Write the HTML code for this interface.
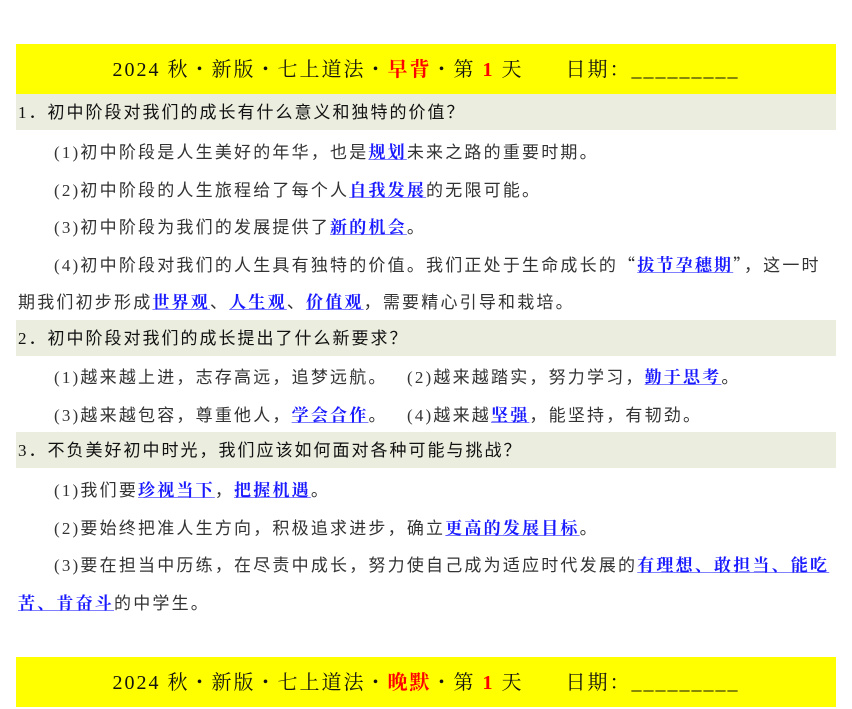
<!DOCTYPE html>
<html><head><meta charset="utf-8"><style>
body{margin:0;background:#fff;width:852px;height:684px;overflow:hidden;position:relative;font-family:"Liberation Serif","Noto Serif CJK SC",serif;color:#222;}
.y{position:absolute;left:16px;width:820px;height:50px;background:#ffff00;font-size:20px;line-height:52px;text-align:center;color:#111;letter-spacing:2px}
.y .r{color:#f00;font-weight:bold}
.g{position:absolute;left:16px;width:820px;height:36px;background:#ebeddf;font-size:17px;letter-spacing:2px;line-height:38px;padding-left:2px;box-sizing:border-box;color:#111;font-family:"Liberation Serif","Noto Sans CJK SC",sans-serif}
.l{position:absolute;left:16px;width:836px;font-size:17px;letter-spacing:2.2px;height:37.5px;display:flex;align-items:center;white-space:pre;font-family:"Liberation Serif","Noto Sans CJK SC",sans-serif;color:#333}
.i{padding-left:38px}
.k{color:#1a1aff;font-weight:bold;text-decoration:underline;text-decoration-color:#8080ff;font-family:"Noto Serif CJK SC",serif}
.q{font-family:"Noto Sans CJK SC",sans-serif}
</style></head><body>
<div class="y" style="top:44px">2024 秋・新版・七上道法・<span class="r">早背</span>・第 <span class="r">1</span> 天&nbsp;&nbsp;&nbsp;&nbsp;&nbsp;&nbsp;日期：_________</div>
<div class="g" style="top:94px">1．初中阶段对我们的成长有什么意义和独特的价值？</div>
<div class="l i" style="top:132px"><span>(1)初中阶段是人生美好的年华，也是<span class="k">规划</span>未来之路的重要时期。</span></div>
<div class="l i" style="top:169.5px"><span>(2)初中阶段的人生旅程给了每个人<span class="k">自我发展</span>的无限可能。</span></div>
<div class="l i" style="top:207px"><span>(3)初中阶段为我们的发展提供了<span class="k">新的机会</span>。</span></div>
<div class="l i" style="top:244.5px"><span>(4)初中阶段对我们的人生具有独特的价值。我们正处于生命成长的<span class="q">“</span><span class="k">拔节孕穗期</span><span class="q">”</span>，这一时</span></div>
<div class="l" style="top:282px;padding-left:2px"><span>期我们初步形成<span class="k">世界观</span>、<span class="k">人生观</span>、<span class="k">价值观</span>，需要精心引导和栽培。</span></div>
<div class="g" style="top:320px">2．初中阶段对我们的成长提出了什么新要求？</div>
<div class="l i" style="top:357px"><span>(1)越来越上进，志存高远，追梦远航。   (2)越来越踏实，努力学习，<span class="k">勤于思考</span>。</span></div>
<div class="l i" style="top:394.5px"><span>(3)越来越包容，尊重他人，<span class="k">学会合作</span>。   (4)越来越<span class="k">坚强</span>，能坚持，有韧劲。</span></div>
<div class="g" style="top:432px">3．不负美好初中时光，我们应该如何面对各种可能与挑战？</div>
<div class="l i" style="top:470px"><span>(1)我们要<span class="k">珍视当下</span>，<span class="k">把握机遇</span>。</span></div>
<div class="l i" style="top:507.5px"><span>(2)要始终把准人生方向，积极追求进步，确立<span class="k">更高的发展目标</span>。</span></div>
<div class="l i" style="top:545px"><span>(3)要在担当中历练，在尽责中成长，努力使自己成为适应时代发展的<span class="k">有理想、敢担当、能吃</span></span></div>
<div class="l" style="top:582.5px;padding-left:2px"><span><span class="k">苦、肯奋斗</span>的中学生。</span></div>
<div class="y" style="top:657px">2024 秋・新版・七上道法・<span class="r">晚默</span>・第 <span class="r">1</span> 天&nbsp;&nbsp;&nbsp;&nbsp;&nbsp;&nbsp;日期：_________</div>
</body></html>
